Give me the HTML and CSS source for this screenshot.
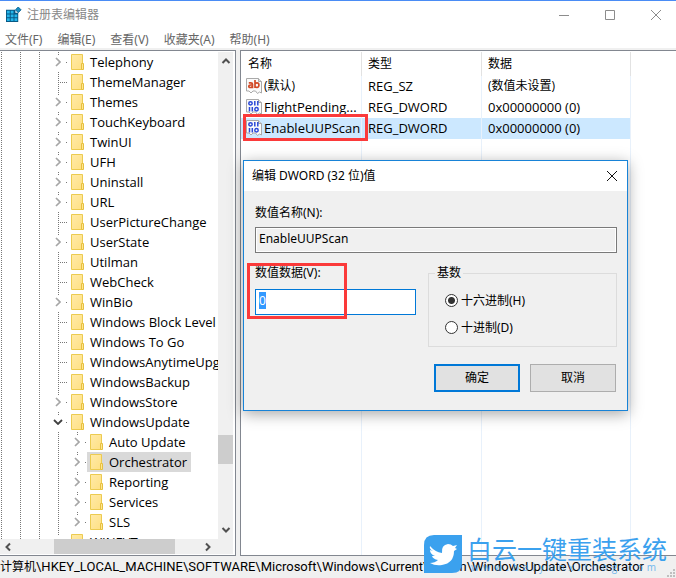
FILE: index.html
```html
<!DOCTYPE html>
<html lang="zh-CN">
<head>
<meta charset="utf-8">
<title>注册表编辑器</title>
<link rel="stylesheet" href="styles.css">
</head>
<body>
<svg class="defs" aria-hidden="true">
  <linearGradient id="fold" x1="0" y1="0" x2="1" y2="1"><stop offset="0" stop-color="#ffeaa8"/><stop offset="1" stop-color="#ffe083"/></linearGradient>
  <symbol id="folder" viewBox="0 0 13 16"><path d="M.5.5h11v15H.5z" fill="url(#fold)" stroke="#eccb50"/><path d="M10.5 9.500h2v6h-2z" fill="#ffe692" stroke="#e6c040"/></symbol>
  <symbol id="closed" viewBox="0 0 6 10"><path d="M1 1l4 4-4 4" fill="none" stroke="#a6a6a6" stroke-width="1.700"/></symbol>
  <symbol id="open" viewBox="0 0 10 6"><path d="M1 1l4 4 4-4" fill="none" stroke="#404040" stroke-width="1.800"/></symbol>
  <symbol id="page" viewBox="0 0 16 16"><path d="M.5.500h12l3 3V15l-2-1-2 1.500-2-2.500H7l-2 2-2-2H.5z" fill="#fafafa" stroke="#a9a9a9"/><path d="M12.500.5v3h3" fill="#ddd" stroke="#a9a9a9"/></symbol>
  <symbol id="sz" viewBox="0 0 16 16"><use href="#page"/><g fill="none" stroke="#d24a26" stroke-width="1.700"><path d="M2.800 4.800h2q1.700 0 1.700 1.500v4M6.300 7H4.500Q2.800 7 2.800 8.300t1.500 1.200q2 0 2-1.500M9 2v8M9 5.800q.8-1 2-1 1.900 0 1.900 2.300T11 9.400q-1.300 0-2-1"/></g></symbol>
  <symbol id="dword" viewBox="0 0 16 16"><use href="#page"/><g fill="none" stroke="#2b49d8" stroke-width="1.500"><path d="M8.800 2v4.500M11.800 2v4.500M3.500 8v4.500M6.300 8v4.500"/><ellipse cx="4.500" cy="4.300" rx="1.700" ry="1.600"/><ellipse cx="10.500" cy="10.300" rx="1.700" ry="1.700"/></g></symbol>
</svg>

<header class="titlebar">
  <svg class="app-icon" viewBox="0 0 17 17"><path d="M0 3h10v3h3v10H0z" fill="#075985"/><g fill="#25b5ea"><path d="M1 4h3v3H1zM5 4h3v3H5zM1 8h3v3H1zM5 8h3v3H5zM9 8h3v3H9zM1 12h3v3H1zM5 12h3v3H5zM9 12h3v3H9z"/></g><path d="M13 0l3 3-3 3-3-3z" fill="#168dc0" stroke="#0a6799"/></svg>
  <h1>注册表编辑器</h1>
  <div class="controls">
    <button aria-label="最小化"><svg viewBox="0 0 12 12"><path d="M1 6.500h10"/></svg></button>
    <button aria-label="最大化"><svg viewBox="0 0 12 12"><path d="M1.500 1.500h9v9h-9z"/></svg></button>
    <button aria-label="关闭"><svg viewBox="0 0 12 12"><path d="M1 1l10 10M11 1L1 11"/></svg></button>
  </div>
</header>
<nav class="menu">
  <a href="#">文件(F)</a><a href="#">编辑(E)</a><a href="#">查看(V)</a><a href="#">收藏夹(A)</a><a href="#">帮助(H)</a>
</nav>

<main class="panes">
  <section class="tree-pane">
    <div class="tree-row">
      <ul class="tree">
        <li><i></i><i></i><i></i><b><svg><use href="#closed"/></svg></b><span><svg><use href="#folder"/></svg>Telephony</span></li>
        <li><i></i><i></i><i></i><i class="leaf"></i><span><svg><use href="#folder"/></svg>ThemeManager</span></li>
        <li><i></i><i></i><i></i><b><svg><use href="#closed"/></svg></b><span><svg><use href="#folder"/></svg>Themes</span></li>
        <li><i></i><i></i><i></i><b><svg><use href="#closed"/></svg></b><span><svg><use href="#folder"/></svg>TouchKeyboard</span></li>
        <li><i></i><i></i><i></i><b><svg><use href="#closed"/></svg></b><span><svg><use href="#folder"/></svg>TwinUI</span></li>
        <li><i></i><i></i><i></i><b><svg><use href="#closed"/></svg></b><span><svg><use href="#folder"/></svg>UFH</span></li>
        <li><i></i><i></i><i></i><b><svg><use href="#closed"/></svg></b><span><svg><use href="#folder"/></svg>Uninstall</span></li>
        <li><i></i><i></i><i></i><b><svg><use href="#closed"/></svg></b><span><svg><use href="#folder"/></svg>URL</span></li>
        <li><i></i><i></i><i></i><i class="leaf"></i><span><svg><use href="#folder"/></svg>UserPictureChange</span></li>
        <li><i></i><i></i><i></i><b><svg><use href="#closed"/></svg></b><span><svg><use href="#folder"/></svg>UserState</span></li>
        <li><i></i><i></i><i></i><i class="leaf"></i><span><svg><use href="#folder"/></svg>Utilman</span></li>
        <li><i></i><i></i><i></i><i class="leaf"></i><span><svg><use href="#folder"/></svg>WebCheck</span></li>
        <li><i></i><i></i><i></i><b><svg><use href="#closed"/></svg></b><span><svg><use href="#folder"/></svg>WinBio</span></li>
        <li><i></i><i></i><i></i><i class="leaf"></i><span><svg><use href="#folder"/></svg>Windows Block Level</span></li>
        <li><i></i><i></i><i></i><i class="leaf"></i><span><svg><use href="#folder"/></svg>Windows To Go</span></li>
        <li><i></i><i></i><i></i><i class="leaf"></i><span><svg><use href="#folder"/></svg>WindowsAnytimeUpgrade</span></li>
        <li><i></i><i></i><i></i><i class="leaf"></i><span><svg><use href="#folder"/></svg>WindowsBackup</span></li>
        <li><i></i><i></i><i></i><b><svg><use href="#closed"/></svg></b><span><svg><use href="#folder"/></svg>WindowsStore</span></li>
        <li><i></i><i></i><i></i><b><svg class="down"><use href="#open"/></svg></b><span><svg><use href="#folder"/></svg>WindowsUpdate</span></li>
        <li><i></i><i></i><i></i><i></i><b><svg><use href="#closed"/></svg></b><span><svg><use href="#folder"/></svg>Auto Update</span></li>
        <li><i></i><i></i><i></i><i></i><b><svg><use href="#closed"/></svg></b><span class="selected"><svg><use href="#folder"/></svg>Orchestrator</span></li>
        <li><i></i><i></i><i></i><i></i><b><svg><use href="#closed"/></svg></b><span><svg><use href="#folder"/></svg>Reporting</span></li>
        <li><i></i><i></i><i></i><i></i><b><svg><use href="#closed"/></svg></b><span><svg><use href="#folder"/></svg>Services</span></li>
        <li><i></i><i></i><i></i><i></i><b><svg><use href="#closed"/></svg></b><span><svg><use href="#folder"/></svg>SLS</span></li>
        <li><i></i><i></i><i></i><b></b><span><svg><use href="#folder"/></svg>WINEVT</span></li>
      </ul>
      <div class="scroll vertical">
        <svg viewBox="0 0 10 10"><path d="M1.500 7L5 3.500 8.500 7"/></svg>
        <div class="before"></div><div class="thumb"></div><div class="after"></div>
        <svg viewBox="0 0 10 10"><path d="M1.500 3L5 6.500 8.500 3"/></svg>
      </div>
    </div>
    <div class="scroll horizontal">
      <svg viewBox="0 0 10 10"><path d="M7 1.500L3.500 5 7 8.500"/></svg>
      <div class="before"></div><div class="thumb"></div><div class="after"></div>
      <svg viewBox="0 0 10 10"><path d="M3 1.500L6.500 5 3 8.500"/></svg>
    </div>
  </section>

  <section class="list-pane">
    <table class="values">
      <colgroup><col class="c1"><col class="c2"><col class="c3"></colgroup>
      <thead><tr><th>名称</th><th>类型</th><th>数据</th></tr></thead>
      <tbody>
        <tr><td class="zh"><svg><use href="#sz"/></svg>(默认)</td><td>REG_SZ</td><td class="zh">(数值未设置)</td></tr>
        <tr><td><svg><use href="#dword"/></svg>FlightPending...</td><td>REG_DWORD</td><td>0x00000000 (0)</td></tr>
        <tr class="selected"><td><svg><use href="#dword"/></svg>EnableUUPScan<div class="mark mark-row"></div></td><td>REG_DWORD</td><td>0x00000000 (0)</td></tr>
        <tr class="rest"><td></td><td></td><td></td></tr>
      </tbody>
    </table>

    <form class="dialog" role="dialog" aria-labelledby="dlg">
      <div class="dialog-title"><h2 id="dlg">编辑 DWORD (32 位)值</h2><button type="button" aria-label="关闭"><svg viewBox="0 0 12 12"><path d="M1 1l10 10M11 1L1 11"/></svg></button></div>
      <div class="dialog-body">
        <label for="name">数值名称(N):</label>
        <input id="name" class="name" type="text" value="EnableUUPScan" readonly>
        <div class="columns">
          <div class="data">
            <label for="data">数值数据(V):</label>
            <input id="data" type="text" value="0">
            <div class="mark mark-data"></div>
          </div>
          <fieldset>
            <legend>基数</legend>
            <label><input type="radio" name="base" checked>十六进制(H)</label>
            <label><input type="radio" name="base">十进制(D)</label>
          </fieldset>
        </div>
        <div class="buttons"><button type="button" class="ok">确定</button><button type="button">取消</button></div>
      </div>
    </form>
  </section>
</main>

<footer class="status">
  <span><span class="zh">计算机</span>\HKEY_LOCAL_MACHINE\SOFTWARE\Microsoft\Windows\CurrentVersion\WindowsUpdate\Orchestrator</span>
  <svg class="grip" viewBox="0 0 9 9"><path d="M6 0h2v2H6zM3 3h2v2H3zM6 3h2v2H6zM0 6h2v2H0zM3 6h2v2H3zM6 6h2v2H6z"/></svg>
</footer>

<div class="watermark">
  <svg viewBox="0 0 38 38"><path d="M10 0h28v28q0 10-10 10H0V10Q0 0 10 0z" fill="#3ba1ee"/><path d="M6 11q5 6 12 7-1-8 6-9 3 0 5 2l4-1-2 3 2 1-3 2q0 12-12 14-7 1-12-2 5 0 8-3-5-1-6-4h3q-5-2-5-6l3 1q-4-2-3-5z" fill="#fff"/></svg>
  <div><strong>白云一键重装系统</strong><small>www.baiyunxitong.com</small></div>
</div>
<script src="script.js"></script>
</body>
</html>
```
FILE: styles.css
```css
* { box-sizing: border-box; }
body {
  margin: 0;
  height: 100vh;
  display: flex;
  flex-direction: column;
  position: relative;
  overflow: hidden;
  background: #fff;
  color: #000;
  font: 13px/20px "Open Sans", "Noto Sans CJK SC", sans-serif;
}
h1, h2, ul { margin: 0; padding: 0; font-weight: normal; }
svg { display: block; flex: none; }
button, input { font: inherit; color: inherit; }
.defs { position: absolute; width: 0; height: 0; }
.zh { font-size: 12px; }

.titlebar { display: flex; align-items: center; height: 29px; padding-left: 6px; border-top: 1px solid #4a8cf5; }
.app-icon { width: 16px; height: 16px; }
h1 { flex: 1; margin-left: 5px; font-size: 12px; color: #888; }
.controls { display: flex; }
.controls button { width: 46px; height: 28px; padding: 0 0 0 20px; border: 0; background: none; }
.controls svg, .dialog-title svg { width: 12px; height: 12px; fill: none; stroke: #8c8c8c; }
.menu { display: flex; gap: 15px; height: 21px; padding: 1px 5px 0; border-bottom: 2px solid #f0f0f0; font: 12px/20px "Noto Sans", "Noto Sans CJK SC", sans-serif; }
.menu a { color: #666; text-decoration: none; }

.panes { flex: 1; min-height: 0; display: flex; gap: 4px; background: #f0f0f0; }
.tree-pane {
  width: 236px; display: flex; flex-direction: column; flex: none;
  border: solid #828790; border-width: 1px 1px 1px 0; padding: 1px 2px 1px 0; background: #fff;
}
.tree-row { flex: 1; min-height: 0; display: flex; }
.tree { flex: 1; min-width: 0; margin-left: -8px; overflow: hidden; list-style: none; }
.tree li { display: flex; height: 20px; white-space: nowrap; }
.tree i, .tree b { flex: none; width: 19px; }
.tree i { background: repeating-linear-gradient(#777 0 1px, transparent 1px 2px) 9px 0 / 1px 20px no-repeat; }
.tree .leaf {
  background:
    repeating-linear-gradient(#777 0 1px, transparent 1px 2px) 9px 0 / 1px 20px no-repeat,
    repeating-linear-gradient(90deg, #777 0 1px, transparent 1px 2px) 11px 10px / 8px 1px no-repeat;
}
.tree b {
  display: flex; align-items: center; justify-content: center; padding-right: 2px;
  background:
    repeating-linear-gradient(#777 0 1px, transparent 1px 2px) 9px 0 / 1px 3px no-repeat,
    repeating-linear-gradient(90deg, #777 0 1px, transparent 1px 2px) 17px 10px / 2px 1px no-repeat;
}
.tree b svg { width: 6px; height: 10px; }
.tree b .down { width: 10px; height: 6px; }
.tree span { display: flex; align-items: center; gap: 6px; padding: 0 4px 0 3px; }
.tree span svg { width: 13px; height: 16px; }
.tree .selected { background: #d9d9d9; }

.scroll { display: flex; align-items: center; background: #f0f0f0; }
.scroll svg { width: 10px; height: 10px; fill: none; stroke: #505050; stroke-width: 2; }
.thumb { background: #cdcdcd; }
.vertical { width: 15px; flex-direction: column; padding: 4px 0; }
.vertical .thumb { width: 15px; height: 29px; }
.vertical .before { flex: 368; }
.vertical .after { flex: 61; }
.horizontal { height: 15px; padding: 0 20px 0 3px; }
.horizontal .thumb { width: 121px; height: 15px; }
.horizontal .before { flex: 41; }
.horizontal .after { flex: 28; }

.list-pane { flex: 1; min-width: 0; position: relative; border: solid #828790; border-width: 1px 0 1px 1px; background: #fff; padding-top: 1px; }
.values { table-layout: fixed; width: 390px; height: 100%; border-collapse: separate; border-spacing: 0; line-height: 20px; }
.c1 { width: 121px; }
.c2 { width: 120px; }
.c3 { width: 149px; }
.values th { height: 24px; padding: 0 6px; text-align: left; font-weight: normal; font-size: 12px; border-right: 1px solid #e2e2e2; }
.values th:first-child { padding-left: 7px; }
.values td { position: relative; height: 21px; padding: 0 6px; vertical-align: top; white-space: nowrap; border-right: 1px solid #e8f1fb; }
.values td:first-child { padding-left: 23px; }
.values td svg { position: absolute; left: 5px; top: 2px; width: 16px; height: 16px; }
.values .selected { background: #cce8ff; }
.values .rest td { height: auto; }
.mark { position: absolute; border: 3px solid #fb3a3a; pointer-events: none; }
.mark-row { left: 2px; top: -4px; width: 125px; height: 27px; z-index: 1; }
.mark-data { left: -8px; top: 0; width: 100px; height: 56px; }

.dialog {
  position: absolute; left: 2px; top: 109px; width: 385px; z-index: 2;
  background: #f0f0f0; border: 1px solid #1883d7; box-shadow: 0 3px 14px rgba(0,0,0,.35);
  font-family: "Noto Sans", "Noto Sans CJK SC", sans-serif;
}
.dialog-title { display: flex; align-items: center; justify-content: space-between; height: 30px; padding: 0 9px 0 8px; background: #fff; }
h2 { font-size: 12px; }
.dialog-title button { padding: 0; border: 0; background: none; }
.dialog-title svg { stroke: #111; }
.dialog-body { padding: 12px 10px 18px 11px; font-size: 12px; }
.dialog-body > label, .data label { display: block; height: 20px; }
input[type="text"] { display: block; width: 100%; height: 26px; margin: 0; padding: 0 3px 3px; border: 1px solid #0078d7; outline: 0; background: #fff; }
.dialog .name { margin-top: 4px; border-color: #7a7a7a; background: #f0f0f0; box-shadow: inset 0 0 0 1px #fff; }
.columns { display: flex; gap: 12px; margin-top: 10px; }
.data { position: relative; width: 161px; }
.data input { margin-top: 6px; }
.data input::selection { background: #3399ff; color: #fff; }
fieldset { flex: 1; min-width: 0; margin: 0; padding: 4px 16px 5px; border: 1px solid #dcdcdc; }
legend { margin-left: -10px; padding: 0 2px; line-height: 20px; }
fieldset label { display: flex; align-items: center; gap: 3px; height: 27px; }
fieldset input { appearance: none; width: 13px; height: 13px; margin: 0; border: 1px solid #333; border-radius: 50%; background: #fff; }
fieldset input:checked { background: radial-gradient(circle, #333 0 3px, #fff 4px); }
.buttons { display: flex; justify-content: flex-end; gap: 10px; margin-top: 17px; padding-right: 1px; }
.buttons button { width: 86px; height: 28px; padding: 0; border: 1px solid #adadad; background: #e1e1e1; }
.buttons .ok { border: 2px solid #0078d7; }

.status { display: flex; justify-content: space-between; align-items: center; height: 22px; background: #f0f0f0; white-space: nowrap; font-family: Roboto, "Noto Sans CJK SC", sans-serif; }
.grip { width: 9px; height: 9px; align-self: flex-end; fill: #bfbfbf; }

.watermark { position: absolute; right: 9px; bottom: 5px; display: flex; gap: 5px; color: #3ba1ee; z-index: 3; }
.watermark svg { width: 38px; height: 38px; }
.watermark div { display: flex; flex-direction: column; }
.watermark strong { font: 25px/26px "Noto Sans CJK SC", sans-serif; }
.watermark small { padding-left: 4px; font-size: 10px; line-height: 12px; letter-spacing: 4px; opacity: .7; }
```
FILE: script.js
```js
const data = document.getElementById("data");
data.focus();
data.select();
```
